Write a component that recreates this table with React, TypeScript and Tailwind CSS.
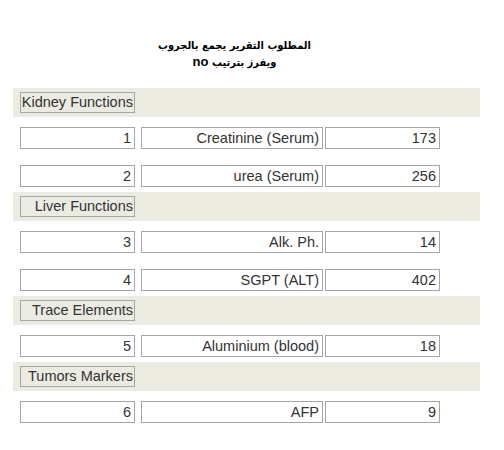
import React from "react";

type Row = { n: string; name: string; v: string };
type Group = { title: string; rows: Row[] };

const groups: Group[] = [
  {
    title: "Kidney Functions",
    rows: [
      { n: "1", name: "Creatinine (Serum)", v: "173" },
      { n: "2", name: "urea (Serum)", v: "256" },
    ],
  },
  {
    title: "Liver Functions",
    rows: [
      { n: "3", name: "Alk. Ph.", v: "14" },
      { n: "4", name: "SGPT (ALT)", v: "402" },
    ],
  },
  {
    title: "Trace Elements",
    rows: [{ n: "5", name: "Aluminium (blood)", v: "18" }],
  },
  {
    title: "Tumors Markers",
    rows: [{ n: "6", name: "AFP", v: "9" }],
  },
];

const box =
  "h-[22px] border border-[#a6a6a6] bg-white text-right pr-[3px] leading-[20px] whitespace-nowrap overflow-hidden";

const arabic = { fontFamily: '"DejaVu Sans Condensed", "DejaVu Sans", sans-serif' };

export default function App() {
  return (
    <div
      className="w-[504px] h-[450px] bg-white text-[#333] text-[14.5px]"
      style={{ fontFamily: '"Liberation Sans", Arial, sans-serif' }}
    >
      <div
        className="w-[469px] h-[69px] pt-[37px] text-center font-bold text-[13px] leading-[16px] text-black"
        style={{ fontFamily: '"Liberation Sans", "DejaVu Sans Condensed", sans-serif' }}
      >
        <div dir="rtl" className="h-[16px]">
          <span className="text-[11px]" style={arabic}>المطلوب التقرير يجمع بالجروب</span>
        </div>
        <div dir="rtl" className="h-[16px] mt-[1px]">
          <span className="text-[11px]" style={arabic}>ويفرز بترتيب</span> no
        </div>
      </div>
      <div className="pl-[13px] mt-[19px] flex flex-col">
        {groups.map((g, gi) => (
          <div key={g.title} className={gi > 0 ? "mt-[5px]" : ""}>
            <div className="w-[467px] h-[29px] bg-[#ecebe2] pl-[7px] pt-[4px]">
              <div className="w-[115px] h-[21px] border border-[#a6a6a6] text-right pr-[1px] leading-[19px] whitespace-nowrap overflow-hidden">
                {g.title}
              </div>
            </div>
            <div className="flex flex-col gap-[16px] mt-[10px] pl-[7px]">
              {g.rows.map((r) => (
                <div key={r.n} className="flex">
                  <div className={`${box} w-[115px]`}>{r.n}</div>
                  <div className={`${box} w-[182px] ml-[6px]`}>{r.name}</div>
                  <div className={`${box} w-[115px] ml-[2px]`}>{r.v}</div>
                </div>
              ))}
            </div>
          </div>
        ))}
      </div>
    </div>
  );
}
